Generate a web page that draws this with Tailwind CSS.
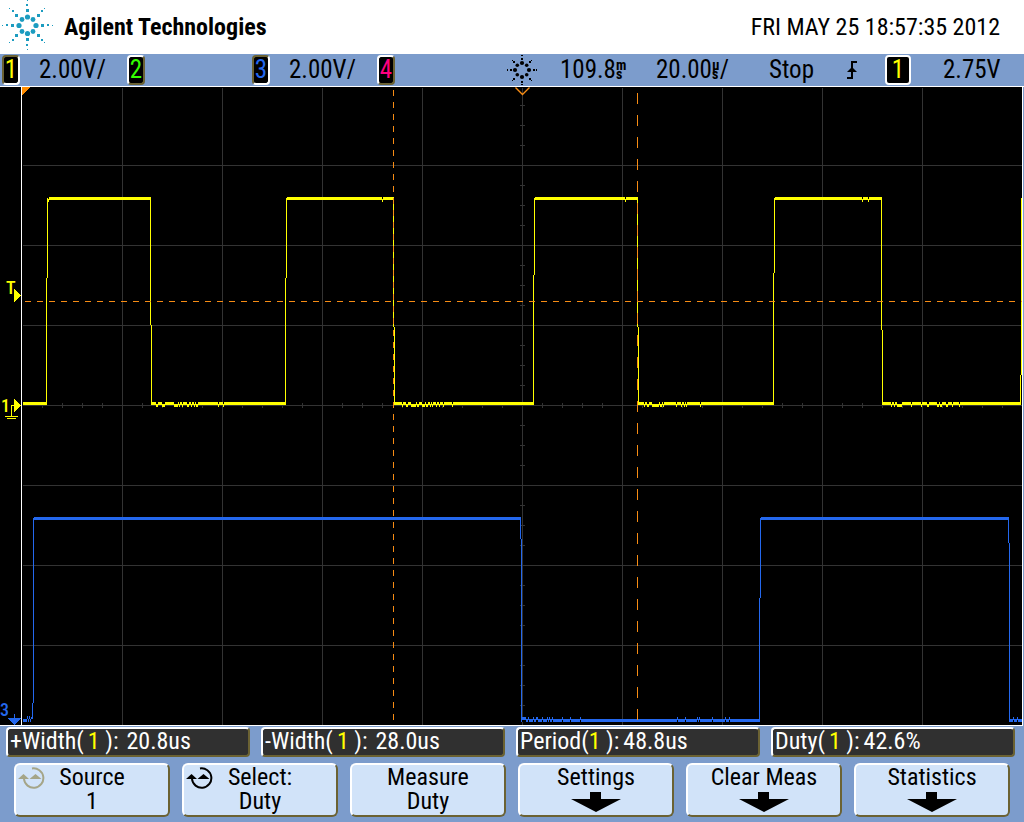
<!DOCTYPE html>
<html lang="en">
<head>
<meta charset="utf-8">
<title>Agilent Technologies oscilloscope</title>
<script src="https://cdn.jsdelivr.net/npm/@tailwindcss/browser@4"></script>
</head>
<body class="min-h-screen bg-[#7c9ccc] font-['Roboto_Condensed','Liberation_Sans_Narrow',Roboto,sans-serif] text-black">
<header class="flex h-[54px] items-center justify-between bg-white pr-6">
  <div class="flex items-center gap-2">
    <svg class="h-[54px] w-14" viewBox="0 0 56 54" fill="#1c9cc0" shape-rendering="crispEdges" aria-hidden="true">
      <g shape-rendering="auto"><circle cx="27.5" cy="17" r="2.6"/><circle cx="33" cy="19.5" r="2.4"/><circle cx="36" cy="25.5" r="2.6"/><circle cx="33" cy="31.5" r="2.4"/><circle cx="27.5" cy="33.5" r="2.6"/><circle cx="22" cy="31.5" r="2.4"/><circle cx="19" cy="25.5" r="2.6"/><circle cx="22" cy="19.5" r="2.4"/></g>
      <path d="M26 9h3v3h-3zM37 14h3v3h-3zM41 24h3v3h-3zM37 34h3v3h-3zM26 38h3v3h-3zM15 34h3v3h-3zM11 24h3v3h-3zM15 14h3v3h-3zM26 4h2v2h-2zM41 10h2v2h-2zM47 24h2v2h-2zM41 39h2v2h-2zM26 44h2v2h-2zM12 39h2v2h-2zM6 24h2v2h-2zM12 10h2v2h-2zM27 0h1v1h-1zM44 8h1v1h-1zM52 25h1v1h-1zM44 42h1v1h-1zM27 49h1v1h-1zM9 42h1v1h-1zM2 25h1v1h-1zM9 8h1v1h-1z"/>
    </svg>
    <h1 class="text-[24px] leading-8 font-bold whitespace-nowrap">Agilent Technologies</h1>
  </div>
  <time class="text-[24px] leading-8 whitespace-nowrap" datetime="2012-05-25T18:57:35">FRI MAY 25 18:57:35 2012</time>
</header>

<section aria-label="Channel status" class="grid h-8 grid-cols-[37fr_88fr_125fr_37fr_88fr_129fr_54fr_96fr_113fr_77fr_39fr_58fr_81fr] items-center pl-[2px] text-[25px] leading-[28px] whitespace-nowrap">
  <button class="h-[30px] w-[18px] rounded border-2 border-t-[#6b6233] border-l-[#6b6233] border-r-white border-b-white bg-black leading-[26px] text-[#ffff00]">1</button>
  <span>2.00V/</span>
  <button class="h-[30px] w-[18px] rounded border-2 border-t-white border-l-white border-r-[#6b6233] border-b-[#6b6233] bg-black leading-[26px] text-[#33ff00]">2</button>
  <button class="h-[30px] w-[18px] rounded border-2 border-t-[#6b6233] border-l-[#6b6233] border-r-white border-b-white bg-black leading-[26px] text-[#2468ee]">3</button>
  <span>2.00V/</span>
  <button class="h-[30px] w-[18px] rounded border-2 border-t-white border-l-white border-r-[#6b6233] border-b-[#6b6233] bg-black leading-[26px] text-[#ff007f]">4</button>
  <svg class="h-8 w-8" viewBox="506 54 32 32" aria-hidden="true">
    <g><circle cx="522" cy="63" r="2.1"/><circle cx="526.7" cy="65.3" r="1.8"/><circle cx="529" cy="70" r="2.1"/><circle cx="526.7" cy="74.7" r="1.8"/><circle cx="522" cy="77" r="2.1"/><circle cx="517.3" cy="74.7" r="1.8"/><circle cx="515" cy="70" r="2.1"/><circle cx="517.3" cy="65.3" r="1.8"/></g>
    <path shape-rendering="crispEdges" d="M521 58h2v2h-2zM521 55h2v1h-2zM521 81h2v2h-2zM521 84h2v1h-2zM533 69h2v2h-2zM536 69h1v2h-1zM510 69h2v2h-2zM507 69h1v2h-1zM529 61h2v2h-2zM531 60h1v1h-1zM513 61h2v2h-2zM512 60h1v1h-1zM529 78h2v2h-2zM531 80h1v1h-1zM513 78h2v2h-2zM512 80h1v1h-1z"/>
  </svg>
  <span class="flex items-center">109.8<span class="flex flex-col text-[14px] leading-[9px] font-bold"><span>m</span><span>s</span></span></span>
  <span class="flex items-center">20.00<span class="flex flex-col text-[14px] leading-[9px] font-bold"><span>µ</span><span>s</span></span>/</span>
  <span>Stop</span>
  <svg class="h-5 w-3" viewBox="0 0 12 20" fill="none" stroke="#000" stroke-width="2" aria-label="Rising edge"><path d="M1 18h5V2h5"/><path d="M6 7l5 5H1z" fill="#000" stroke="none"/></svg>
  <button class="h-[30px] w-[26px] rounded border-2 border-white bg-black leading-[26px] text-[#ffff00]">1</button>
  <span>2.75V</span>
</section>

<main>
<svg id="plot" class="block h-[640px] w-full" viewBox="0 86 1024 640" preserveAspectRatio="none" shape-rendering="crispEdges" role="img" aria-label="Waveform display">
  <rect x="0" y="86" width="1023" height="640" fill="#000"/>
  <g transform="translate(.5 .5)" fill="none" stroke-width="1">
    <g stroke="#333">
      <path d="M122 87V725M222 87V725M322 87V725M422 87V725M522 87V725M622 87V725M722 87V725M822 87V725M922 87V725"/>
      <path d="M22 165H1022M22 245H1022M22 325H1022M22 405H1022M22 485H1022M22 565H1022M22 645H1022"/>
      <path id="ticks"/>
    </g>
    <g stroke="#2468ee">
      <path stroke-width="3" d="M22 720H26M33 518H520M521 720H759M760 518H1008M1009 720H1021"/>
      <path d="M26 720l1-3 1 3 1-3 1 3 1-3 1 1V702M33 702V517M520 519V538M521 538V721M759 721V597M760 597V517M1008 519V542M1009 542V721"/>
    </g>
    <g stroke="#ffff00">
      <path stroke-width="3" d="M22 403H46M47 198H150M151 403H285M286 198H393M394 403H533M534 198H637M638 403H773M774 198H881M882 403H1020"/>
      <path d="M46 402V277M47 277V197M150 199V324M151 324V404M285 402V277M286 277V197M393 199V326M394 326V404M533 402V274M534 274V197M637 199V326M638 326V404M773 402V272M774 272V197M881 199V329M882 329V404M1020 402V374M1021 374V197"/>
    </g>
  </g>
  <g id="noise"></g>
  <g transform="translate(.5 .5)" fill="none" stroke="#f78c14">
    <path d="M393 89.5V721" stroke-dasharray="6 6"/>
    <path d="M637 92.5V721" stroke-dasharray="11 11"/>
    <path d="M24.5 301H1021" stroke-dasharray="6 6"/>
    <path d="M515 87l7 7 7-7" stroke-width="1.4" shape-rendering="auto"/>
  </g>
  <path d="M22 87h8l-8 8z" fill="#ff8c00"/>
  <path d="M0 86h1024v1H0zM0 725h1023v1H0zM21 87h1v638h-1zM1022 87h1v638h-1z" fill="#fff"/>
  <g fill="#ffff00" font-size="18" font-family="Roboto Condensed" font-weight="500">
    <text x="6" y="294">T</text>
    <path d="M14 289l7 6.500-7 6.500z"/>
    <text x="1" y="412">1</text>
    <path d="M14 399l7 6.500-7 6.500zM11 405h4v1h-3v10h6v1H5v-1h6zM7 418h9v1H7z"/>
  </g>
  <g fill="#2468ee">
    <text x="0" y="716" font-size="18" font-family="Roboto Condensed" font-weight="500">3</text>
    <path d="M8 718h6v-4h1v4h6l-6.500 7z"/>
  </g>
</svg>
</main>

<section aria-label="Measurements" class="grid grid-cols-4 gap-[11px] pt-px pr-[9px] pl-[6px] text-[24px] leading-6 whitespace-nowrap text-white">
  <div class="flex h-[30px] gap-2 rounded border-2 border-t-white border-l-white border-r-[#6b6233] border-b-[#6b6233] bg-[#303030] pl-[2px]"><span>+Width(<span class="ml-1 text-[#ffff00]">1</span> ):</span><span>20.8us</span></div>
  <div class="flex h-[30px] gap-2 rounded border-2 border-t-white border-l-white border-r-[#6b6233] border-b-[#6b6233] bg-[#303030] pl-[2px]"><span>-Width(<span class="ml-1 text-[#ffff00]">1</span> ):</span><span>28.0us</span></div>
  <div class="flex h-[30px] gap-1 rounded border-2 border-t-white border-l-white border-r-[#6b6233] border-b-[#6b6233] bg-[#303030] pl-[2px]"><span>Period(<span class="text-[#ffff00]">1</span> ):</span><span>48.8us</span></div>
  <div class="flex h-[30px] gap-1 rounded border-2 border-t-white border-l-white border-r-[#6b6233] border-b-[#6b6233] bg-[#303030] pl-[2px]"><span>Duty(<span class="ml-1 text-[#ffff00]">1</span> ):</span><span>42.6%</span></div>
</section>

<nav aria-label="Softkeys" class="grid grid-cols-6 gap-3 px-[14px] pt-[6px] pb-[5px] text-[24px] leading-6 whitespace-nowrap">
  <button class="relative flex h-[54px] flex-col items-center rounded-md border-2 border-t-white border-l-white border-r-[#6b6233] border-b-[#6b6233] bg-[#d1e3f9]">
    <svg class="absolute top-[2px] left-[2px] h-[22px] w-7 text-[#a5a588]" viewBox="0 0 28 22" aria-hidden="true"><path d="M14 1.500A9.700 9.700 0 1 1 6 12" fill="none" stroke="currentColor" stroke-width="2"/><path d="M0 12l5.500-5 5.500 5zM11.500 12l6-5 6 5z" fill="currentColor"/></svg>
    <span>Source</span><span>1</span>
  </button>
  <button class="relative flex h-[54px] flex-col items-center rounded-md border-2 border-t-white border-l-white border-r-[#6b6233] border-b-[#6b6233] bg-[#d1e3f9]">
    <svg class="absolute top-[2px] left-[2px] h-[22px] w-7 text-black" viewBox="0 0 28 22" aria-hidden="true"><path d="M14 1.500A9.700 9.700 0 1 1 6 12" fill="none" stroke="currentColor" stroke-width="2"/><path d="M0 12l5.500-5 5.500 5zM11.500 12l6-5 6 5z" fill="currentColor"/></svg>
    <span>Select:</span><span>Duty</span>
  </button>
  <button class="flex h-[54px] flex-col items-center rounded-md border-2 border-t-white border-l-white border-r-[#6b6233] border-b-[#6b6233] bg-[#d1e3f9]"><span>Measure</span><span>Duty</span></button>
  <button class="flex h-[54px] flex-col items-center rounded-md border-2 border-t-white border-l-white border-r-[#6b6233] border-b-[#6b6233] bg-[#d1e3f9]"><span>Settings</span><svg class="mt-[3px] h-5 w-[50px]" viewBox="0 0 50 20" aria-hidden="true"><path d="M19 0h11v7h20L25 20 0 7h19z"/></svg></button>
  <button class="flex h-[54px] flex-col items-center rounded-md border-2 border-t-white border-l-white border-r-[#6b6233] border-b-[#6b6233] bg-[#d1e3f9]"><span>Clear Meas</span><svg class="mt-[3px] h-5 w-[50px]" viewBox="0 0 50 20" aria-hidden="true"><path d="M19 0h11v7h20L25 20 0 7h19z"/></svg></button>
  <button class="flex h-[54px] flex-col items-center rounded-md border-2 border-t-white border-l-white border-r-[#6b6233] border-b-[#6b6233] bg-[#d1e3f9]"><span>Statistics</span><svg class="mt-[3px] h-5 w-[50px]" viewBox="0 0 50 20" aria-hidden="true"><path d="M19 0h11v7h20L25 20 0 7h19z"/></svg></button>
</nav>

<script>
// Minor divisions along both centre axes
let ticks = '';
for (let x = 42; x < 1022; x += 20) ticks += `M${x} 402.500v5`;
for (let y = 105; y < 725; y += 20) ticks += `M519.500 ${y}h5`;
document.getElementById('ticks').setAttribute('d', ticks);

// Sample noise: short runs [x, width] shifted two units off the trace
const low1 = [[156,2],[162,3],[174,4],[179,1],[182,1],[187,2],[191,1],[194,1],[196,2],[218,1],[223,1],
  [402,1],[406,2],[411,5],[417,2],[422,3],[426,2],[430,1],[432,1],[436,1],[439,1],[443,1],[452,1],
  [644,1],[647,2],[652,7],[660,2],[663,1],[676,1],[681,1],[684,1],[686,1],[700,1],
  [891,1],[894,1],[897,5],[911,1],[921,1],[927,2],[937,2],[940,2],[946,2],[952,1],[959,1]];
const high1 = [[48,1],[382,1],[625,1],[862,1],[868,1]];
const low3 = [[522,4],[528,1],[533,1],[536,2],[542,1],[547,1],[549,1],[552,1],[562,1],[570,1],[580,1],
  [677,1],[685,1],[697,1],[699,1],[712,1],[725,1],[729,1],[1013,1],[1017,1]];
const rect = (x, y, w, h, fill) => `<rect x="${x}" y="${y}" width="${w}" height="${h}" fill="${fill}"/>`;
let out = '';
low1.forEach(([x, w]) => out += rect(x, 402, w, 2, '#000') + rect(x, 404, w, 3, '#ffff00'));
high1.forEach(([x, w]) => out += rect(x, 197, w, 2, '#000') + rect(x, 199, w, 3, '#ffff00'));
low3.forEach(([x, w]) => out += rect(x, 720, w, 2, '#000') + rect(x, 717, w, 3, '#2468ee'));
document.getElementById('noise').innerHTML = out;
</script>
</body>
</html>
